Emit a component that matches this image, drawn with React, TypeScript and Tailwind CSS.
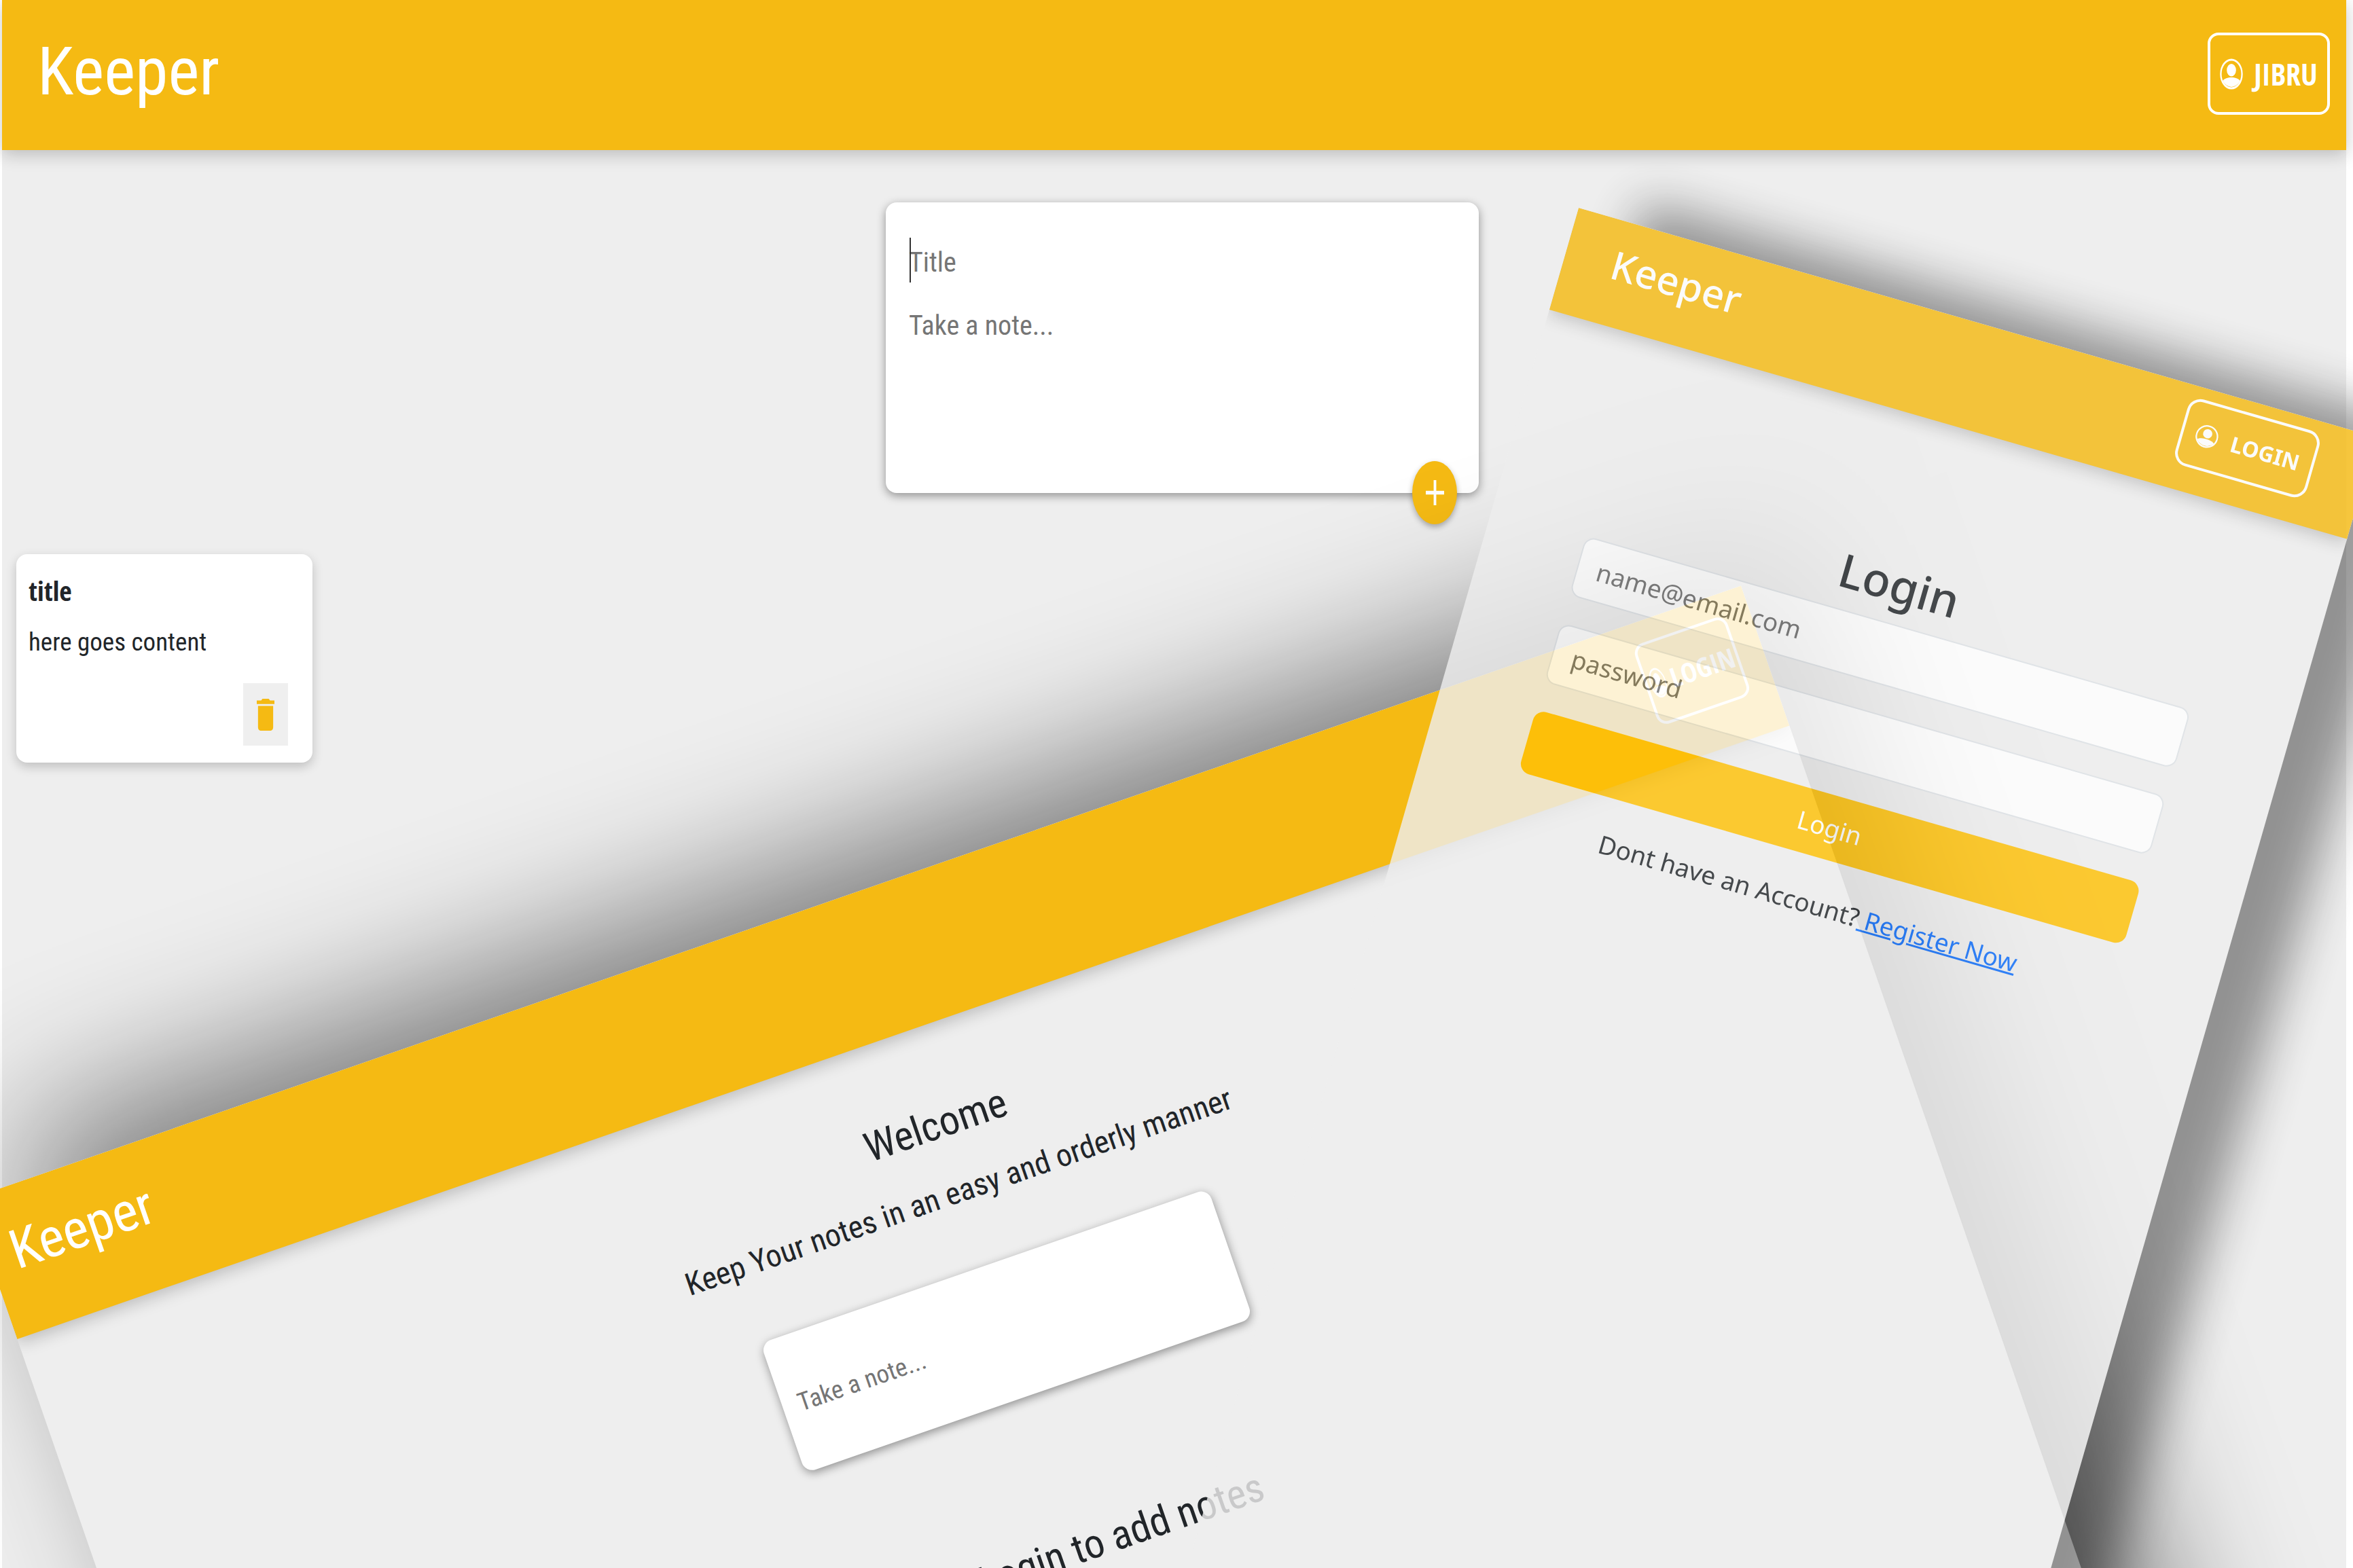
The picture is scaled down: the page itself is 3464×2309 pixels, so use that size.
import React from "react";

const labelFont = "font-['Open_Sans_Condensed','Noto_Sans',sans-serif] font-bold";

function UserIcon({ className }: { className: string }) {
  return (
    <svg viewBox="0 0 24 24" preserveAspectRatio="none" className={className} aria-hidden="true">
      <circle cx="12" cy="12" r="11" fill="none" stroke="currentColor" strokeWidth="1.6" />
      <circle cx="12" cy="9" r="4.8" fill="currentColor" />
      <path d="M3 17.2C6.2 13.7 17.8 13.7 21 17.2A11 11 0 0 1 3 17.2Z" fill="currentColor" />
    </svg>
  );
}

function HomeHeader() {
  return (
    <header className="flex items-start justify-between bg-[#f5ba13] pt-12 pr-6 pb-[52px] pl-[52px] text-white shadow-[0_6px_24px_rgba(0,0,0,0.22)]">
      <h1 className="text-[98px] leading-[116px]">Keeper</h1>
      <button className={labelFont + " flex h-[121px] w-[180px] items-center justify-center gap-4 rounded-2xl border-4 border-white text-[44px]"}>
        <UserIcon className="h-[46px] w-[34px]" />
        JIBRU
      </button>
    </header>
  );
}

function NoteForm() {
  return (
    <form className="relative mx-auto flex h-[428px] w-[873px] flex-col rounded-2xl bg-white px-[34px] pt-[50px] shadow-[0_4px_14px_rgba(0,0,0,0.4)]">
      <span className="absolute top-[52px] left-[35px] h-[66px] w-[2px] bg-[#333]" />
      <input
        aria-label="Title"
        placeholder="Title"
        className="h-[76px] w-full bg-transparent text-[40px] outline-none placeholder:text-[#757575]"
      />
      <textarea
        aria-label="Note"
        placeholder="Take a note..."
        className="mt-4 h-[200px] w-full resize-none bg-transparent text-[40px] leading-[80px] outline-none placeholder:text-[#757575]"
      />
      <button
        type="button"
        aria-label="Add"
        className="absolute right-8 -bottom-[46px] flex h-[93px] w-[66px] items-center justify-center rounded-[50%] bg-[#f5ba13] text-white shadow-[0_4px_8px_rgba(0,0,0,0.3)]"
      >
        <svg viewBox="0 0 14 14" preserveAspectRatio="none" className="h-[37px] w-[27px]" aria-hidden="true">
          <path d="M8 0v6h6v2H8v6H6V8H0V6h6V0z" fill="currentColor" />
        </svg>
      </button>
    </form>
  );
}

function NoteCard() {
  return (
    <article className="flex w-[436px] flex-col rounded-2xl bg-white px-[18px] pt-5 pb-[25px] text-[#212529] shadow-[0_6px_16px_rgba(0,0,0,0.2)]">
      <h2 className={labelFont + " text-[40px] leading-[68px]"}>title</h2>
      <p className="pt-2 text-[37px] leading-[68px]">here goes content</p>
      <button
        aria-label="Delete"
        className="mt-[26px] mr-[18px] flex h-[92px] w-[66px] items-center justify-center self-end bg-[#efefef] text-[#f5ba13]"
      >
        <svg viewBox="5 3 14 18" preserveAspectRatio="none" className="h-[47px] w-[26px]" aria-hidden="true">
          <path d="M6 19c0 1.1.9 2 2 2h8c1.1 0 2-.9 2-2V7H6v12zM19 4h-3.500l-1-1h-5l-1 1H5v2h14V4z" fill="currentColor" />
        </svg>
      </button>
    </article>
  );
}

function WelcomePanel() {
  return (
    <div className="absolute top-[1766px] left-[-46px] h-[2000px] w-[2761px] origin-top-left rotate-[-19.1deg]">
      <div className="absolute inset-0 translate-x-[90px] -translate-y-[60px] bg-black/50 blur-[110px]" />
      <section className="relative h-full overflow-hidden bg-[#eee] text-[#212529]">
        <header className="flex items-start justify-between bg-[#f5ba13] pt-8 pr-[37px] pb-[61px] pl-[34px] text-white shadow-[0_6px_24px_rgba(0,0,0,0.22)]">
          <h1 className="text-[80px] leading-[124px]">Keeper</h1>
          <button className={labelFont + " flex h-[125px] w-[144px] items-center justify-center gap-2 rounded-2xl border-4 border-white text-[40px]"}>
            <UserIcon className="h-[46px] w-[24px]" />
            LOGIN
          </button>
        </header>
        <div className="flex flex-col items-center">
          <h2 className="pt-[92px] text-[60px] leading-[106px]">Welcome</h2>
          <p className="text-[46px] leading-[100px]">Keep Your notes in an easy and orderly manner</p>
          <input
            aria-label="Note"
            placeholder="Take a note..."
            className="mt-[66px] h-[202px] w-[697px] rounded-2xl bg-white px-6 text-[37px] shadow-[0_4px_14px_rgba(0,0,0,0.4)] outline-none placeholder:text-[#757575]"
          />
          <h2 className="pt-[188px] pl-[122px] text-[60px] leading-[100px]">Login to add notes</h2>
        </div>
      </section>
    </div>
  );
}

const field =
  "h-[91px] w-full rounded-2xl border-2 border-[#dee2e6] bg-white px-7 text-[37px] outline-none placeholder:text-[#6c6c6c]";

function LoginPanel() {
  return (
    <section className="absolute top-[306px] left-[2324px] h-[2400px] w-[1222px] origin-top-left rotate-[16.05deg] overflow-hidden bg-[#eee] font-['Noto_Sans',sans-serif] text-[#212529] opacity-[0.82] shadow-[90px_-35px_70px_rgba(0,0,0,0.47)]">
      <header className="flex items-start justify-between bg-[#f5ba13] pt-[17px] pr-[77px] pb-[37px] pl-[70px] text-white shadow-[0_6px_24px_rgba(0,0,0,0.22)]">
        <h1 className="text-[58px] leading-[96px] font-medium">Keeper</h1>
        <button className="flex h-[102px] w-[202px] items-center justify-center gap-5 rounded-[20px] border-4 border-white text-[32px] font-bold">
          <UserIcon className="size-[34px]" />
          LOGIN
        </button>
      </header>
      <form className="ml-[144px] flex w-[927px] flex-col items-center">
        <h2 className="pt-[188px] text-[68px] leading-[117px] font-medium">Login</h2>
        <input type="email" aria-label="Email" placeholder="name@email.com" className={field} />
        <input type="password" aria-label="Password" placeholder="password" className={field + " mt-[42px]"} />
        <button type="button" className="mt-[42px] h-[95px] w-full rounded-2xl bg-[#ffc107] text-[37px] text-white">
          Login
        </button>
        <p className="pt-[42px] text-[37px] leading-[54px]">
          Dont have an Account?
          <a href="#register" className="text-[#0d6efd] underline">
            {" "}
            Register Now
          </a>
        </p>
      </form>
    </section>
  );
}

export default function App() {
  return (
    <div className="relative h-screen overflow-hidden bg-white pr-[10px] pl-[3px] font-['Roboto_Condensed','Roboto',sans-serif]">
      <main className="h-full bg-[#eee]">
        <HomeHeader />
        <div className="pt-[77px] pl-6">
          <NoteForm />
        </div>
        <div className="pt-[90px] pl-[21px]">
          <NoteCard />
        </div>
      </main>
      <WelcomePanel />
      <LoginPanel />
    </div>
  );
}
